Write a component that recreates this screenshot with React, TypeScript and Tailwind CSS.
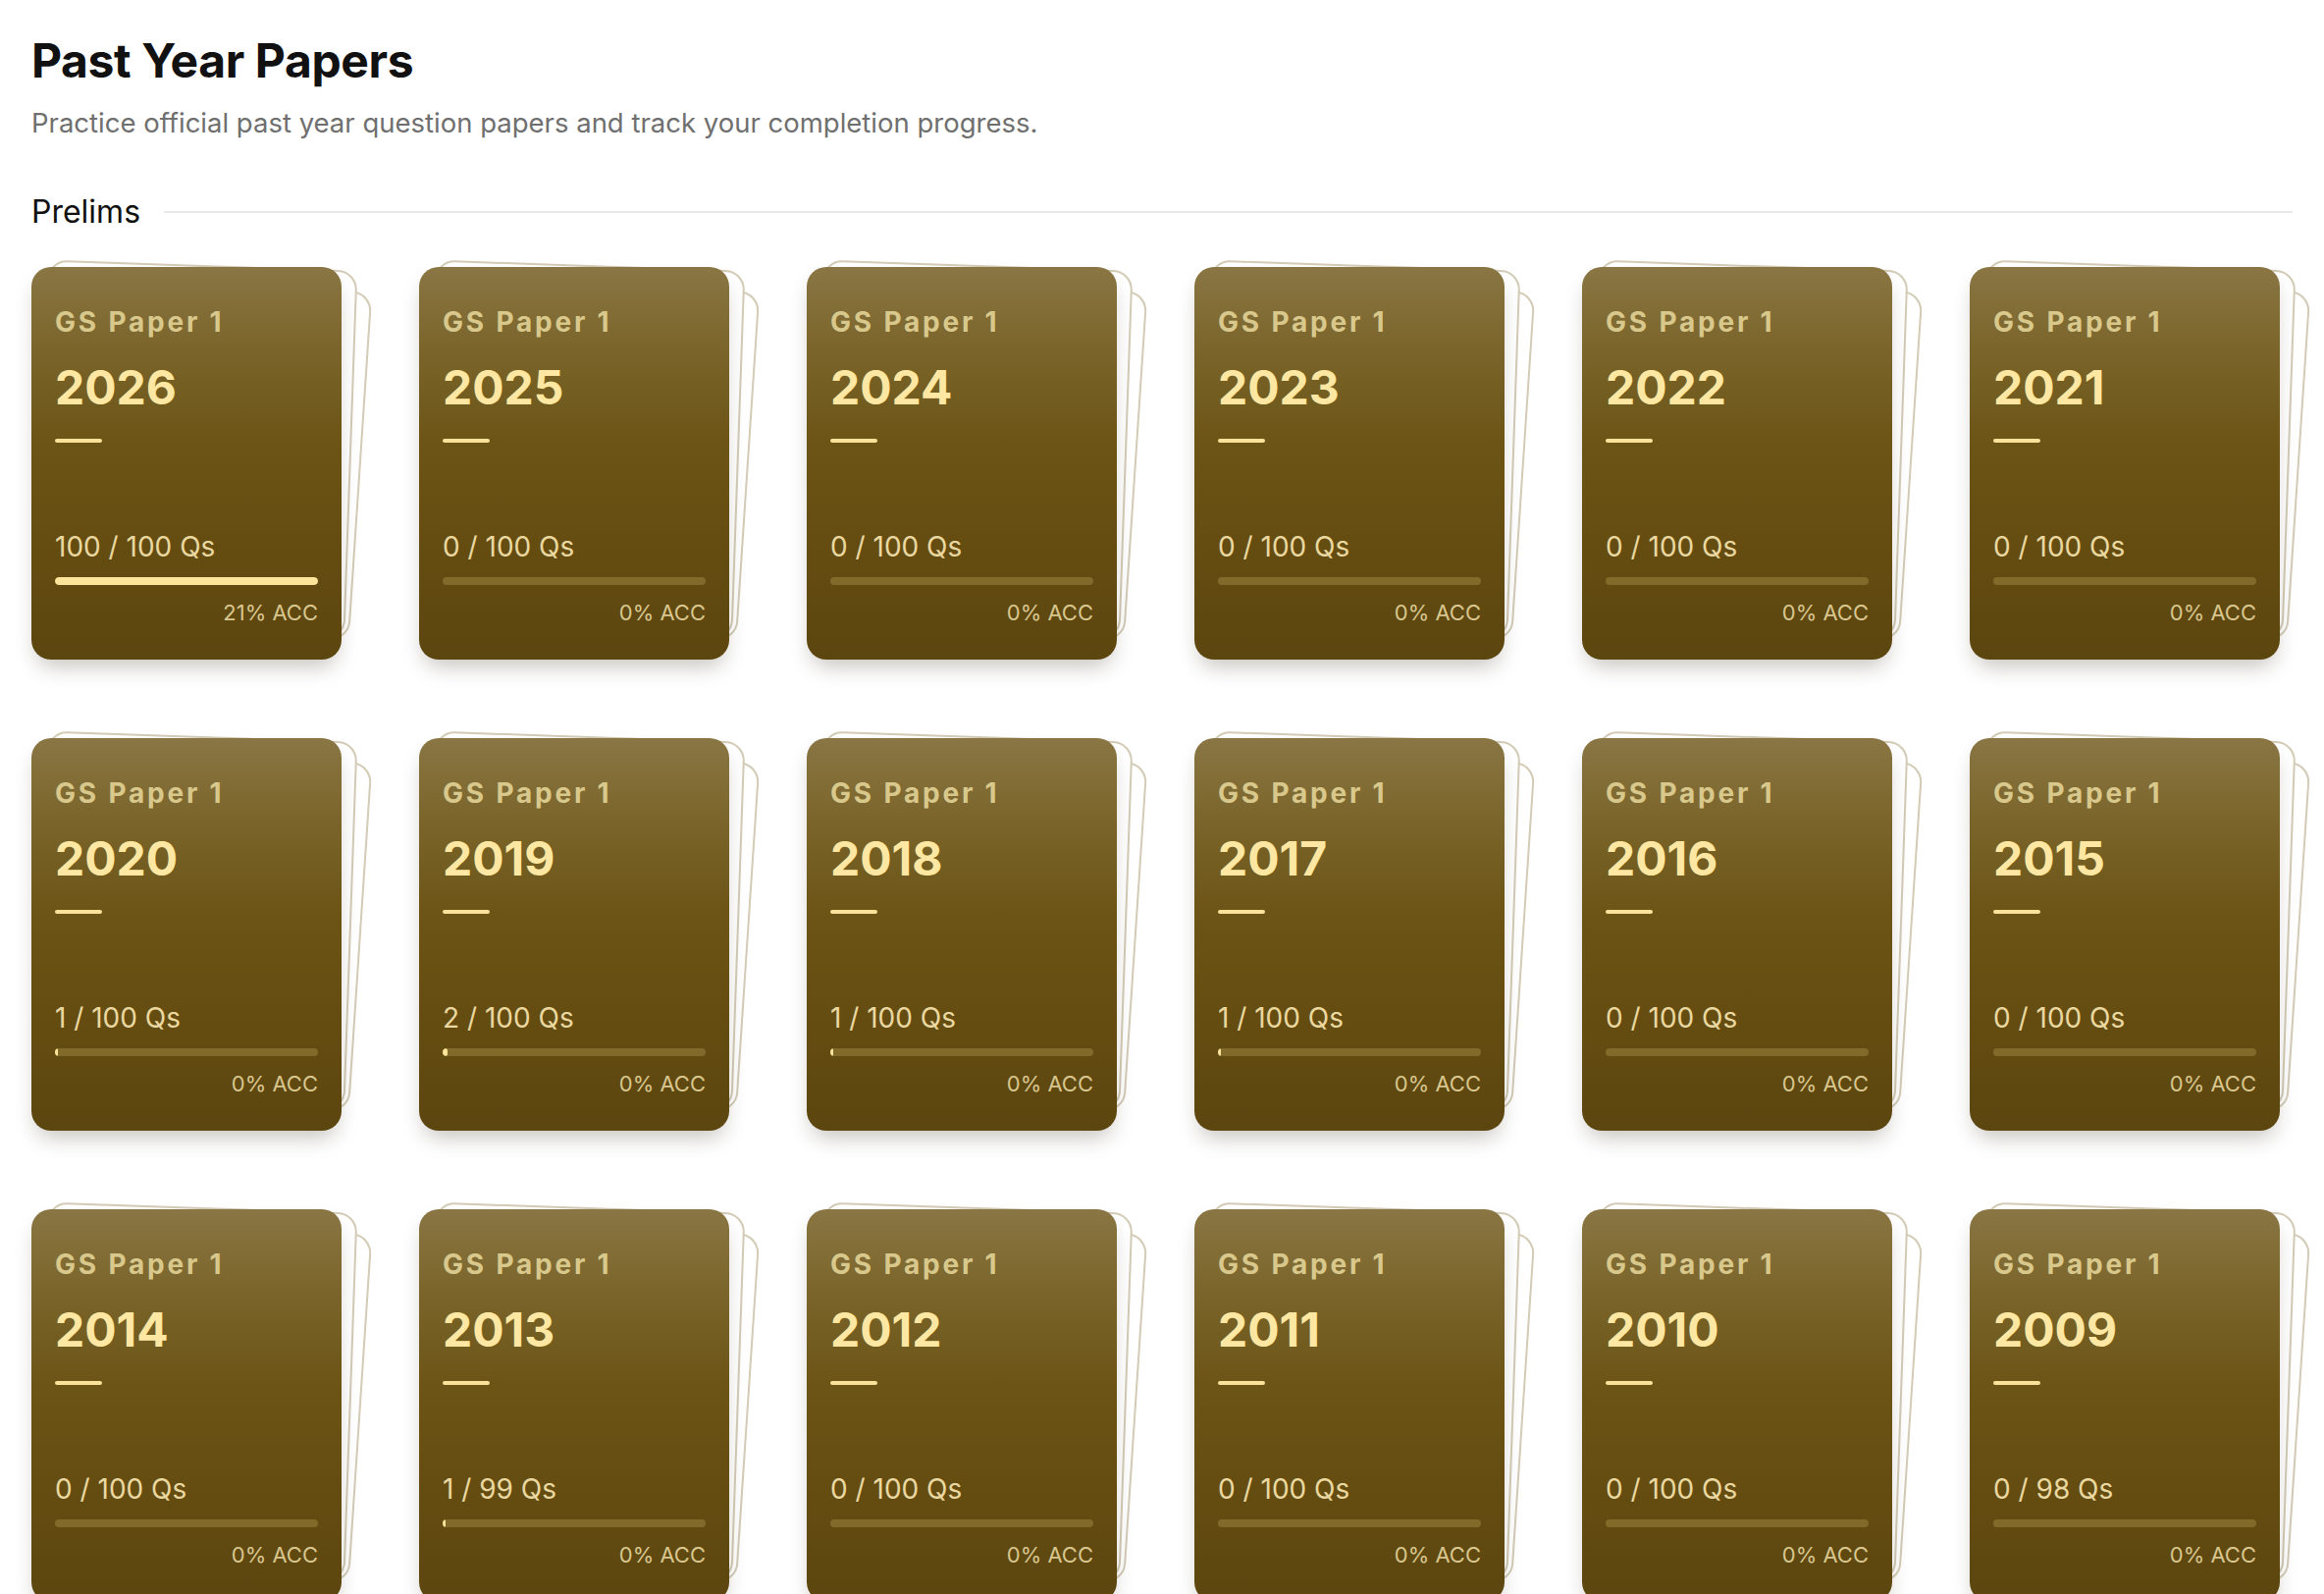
import React from "react";

type Paper = {
  year: number;
  done: number;
  total: number;
  acc: number;
};

const papers: Paper[] = [
  { year: 2026, done: 100, total: 100, acc: 21 },
  { year: 2025, done: 0, total: 100, acc: 0 },
  { year: 2024, done: 0, total: 100, acc: 0 },
  { year: 2023, done: 0, total: 100, acc: 0 },
  { year: 2022, done: 0, total: 100, acc: 0 },
  { year: 2021, done: 0, total: 100, acc: 0 },
  { year: 2020, done: 1, total: 100, acc: 0 },
  { year: 2019, done: 2, total: 100, acc: 0 },
  { year: 2018, done: 1, total: 100, acc: 0 },
  { year: 2017, done: 1, total: 100, acc: 0 },
  { year: 2016, done: 0, total: 100, acc: 0 },
  { year: 2015, done: 0, total: 100, acc: 0 },
  { year: 2014, done: 0, total: 100, acc: 0 },
  { year: 2013, done: 1, total: 99, acc: 0 },
  { year: 2012, done: 0, total: 100, acc: 0 },
  { year: 2011, done: 0, total: 100, acc: 0 },
  { year: 2010, done: 0, total: 100, acc: 0 },
  { year: 2009, done: 0, total: 98, acc: 0 },
];

function PaperCard({ paper }: { paper: Paper }) {
  const pct = paper.total ? (paper.done / paper.total) * 100 : 0;
  return (
    <div className="relative w-[316px] h-[400px]">
      {/* loose sheets fanned out behind the cover */}
      <div className="absolute left-0 top-0 w-full h-[356px] rounded-[20px] bg-white border-2 border-[#d3cbb6] translate-x-[20px] translate-y-[15px] rotate-[3.8deg]" />
      <div className="absolute left-0 top-0 w-full h-[376px] rounded-[20px] bg-white border-2 border-[#d3cbb6] translate-x-[10px] -translate-y-[2px] rotate-[2deg]" />
      {/* cover */}
      <div className="relative flex h-full w-full flex-col justify-between rounded-[20px] bg-[linear-gradient(180deg,#8a7644_0%,#7a6429_22%,#6c5416_45%,#654d11_70%,#5c460f_100%)] px-6 pt-[42px] pb-[37px] shadow-[0_12px_22px_-6px_rgba(40,30,0,0.28)]">
        <div className="flex flex-col">
          <div className="text-[28px] leading-none font-bold tracking-[0.1em] text-[#d9c88c]">
            GS Paper 1
          </div>
          <div className="mt-[29px] text-[48px] leading-none font-bold text-[#fde7a2]">
            {paper.year}
          </div>
          <div className="mt-[28px] h-[4px] w-[48px] rounded-full bg-[#fbe29a]" />
        </div>
        <div className="flex flex-col">
          <div className="text-[28px] leading-none font-normal text-[#ead8a0]">
            {paper.done} / {paper.total} Qs
          </div>
          <div className="mt-[17px] h-[8px] w-full overflow-hidden rounded-full bg-[rgba(253,230,150,0.2)]">
            <div
              className="h-full rounded-full bg-[#fde49b]"
              style={{ width: `${pct}%` }}
            />
          </div>
          <div className="mt-[17px] text-right text-[22px] leading-none text-[#d8c68e]">
            {paper.acc}% ACC
          </div>
        </div>
      </div>
    </div>
  );
}

export default function App() {
  return (
    <div className="min-h-screen bg-white px-8 pt-[38px] pb-24 font-['Inter','Liberation_Sans',sans-serif]">
      <h1 className="text-[48px] leading-none font-bold tracking-[-0.4px] text-[#111111]">
        Past Year Papers
      </h1>
      <p className="mt-[26px] text-[27.5px] leading-none text-[#6f6f6f]">
        Practice official past year question papers and track your completion progress.
      </p>

      <div className="mt-[60px] flex items-center gap-6">
        <h2 className="text-[32px] leading-none font-normal text-[#111111]">Prelims</h2>
        <div className="h-[2px] flex-1 bg-[#e8e8e8]" />
      </div>

      <div className="mt-[40px] grid grid-cols-[repeat(6,316px)] gap-x-[79px] gap-y-[80px]">
        {papers.map((p) => (
          <PaperCard key={p.year} paper={p} />
        ))}
      </div>
    </div>
  );
}
